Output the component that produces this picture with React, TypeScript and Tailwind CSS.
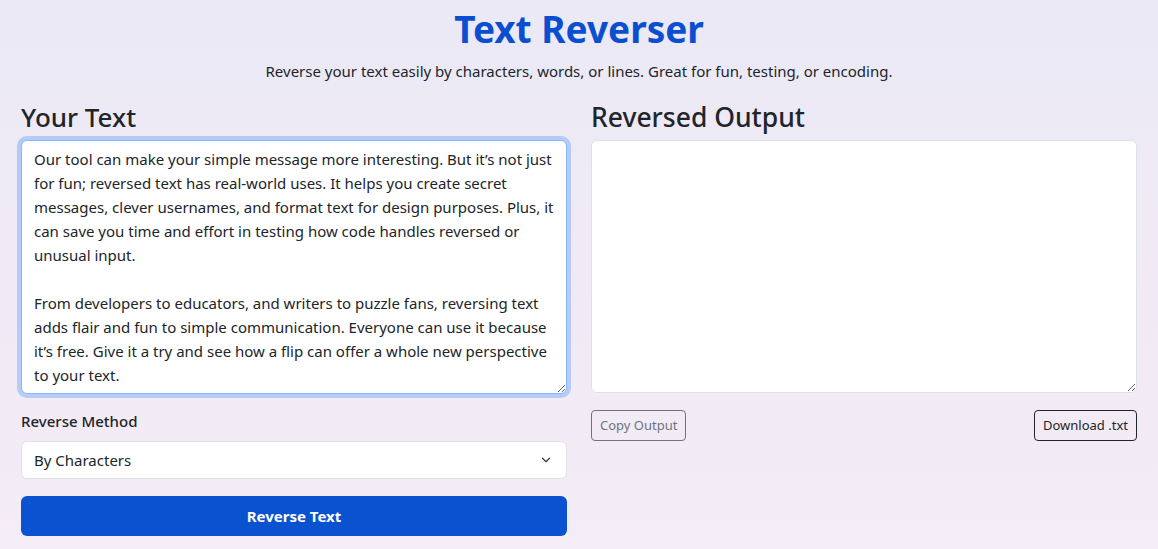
import React, { useState } from 'react';
import { ChevronDown } from 'lucide-react';

const SAMPLE = `Our tool can make your simple message more interesting. But it’s not just for fun; reversed text has real-world uses. It helps you create secret messages, clever usernames, and format text for design purposes. Plus, it can save you time and effort in testing how code handles reversed or unusual input.

From developers to educators, and writers to puzzle fans, reversing text adds flair and fun to simple communication. Everyone can use it because it’s free. Give it a try and see how a flip can offer a whole new perspective to your text.`;

const App = () => {
  const [text, setText] = useState(SAMPLE);
  const [method, setMethod] = useState('chars');
  const [output, setOutput] = useState('');

  const reverse = () => {
    if (method === 'words') setOutput(text.split(' ').reverse().join(' '));
    else if (method === 'lines') setOutput(text.split('\n').reverse().join('\n'));
    else setOutput(Array.from(text).reverse().join(''));
  };

  return (
    <div className="min-h-[549px] bg-gradient-to-b from-[#ebe9f6] to-[#f4ecf6] font-['Noto_Sans',sans-serif] text-[#212529]">
      <div className="mx-auto max-w-[1140px] px-3">
        <h1 className="pt-[5px] text-center text-[37px] font-bold leading-[48px] text-[#0b4fd0]">Text Reverser</h1>
        <p className="mt-[6px] text-center text-[15px] leading-6">
          Reverse your text easily by characters, words, or lines. Great for fun, testing, or encoding.
        </p>

        <div className="mt-[17px] grid grid-cols-2 gap-6">
          <div>
            <h2 className="text-[26px] font-medium leading-[34px]">Your Text</h2>
            <textarea
              rows={10}
              value={text}
              onChange={(e) => setText(e.target.value)}
              className="mt-[6px] block h-[254px] w-full rounded-md border border-[#86b7fe] bg-white px-3 py-[6px] text-[15px] leading-6 outline-none ring-4 ring-[#0d6efd]/25"
            />

            <label className="mt-[15px] block text-[15px] font-medium leading-6">Reverse Method</label>
            <div className="relative mt-2">
              <select
                value={method}
                onChange={(e) => setMethod(e.target.value)}
                className="block h-[38px] w-full appearance-none rounded-md border border-[#dee2e6] bg-white px-3 text-[15px]"
              >
                <option value="chars">By Characters</option>
                <option value="words">By Words</option>
                <option value="lines">By Lines</option>
              </select>
              <ChevronDown className="pointer-events-none absolute right-[14px] top-[12px] h-[14px] w-[14px] text-[#343a40]" strokeWidth={2} />
            </div>

            <button
              onClick={reverse}
              className="mt-[17px] block h-10 w-full rounded-md bg-[#0b52d1] text-[15px] font-bold text-white"
            >
              Reverse Text
            </button>
          </div>

          <div>
            <h2 className="text-[26.5px] font-medium leading-[34px]">Reversed Output</h2>
            <textarea
              rows={10}
              readOnly
              value={output}
              className="mt-[6px] block h-[253px] w-full rounded-md border border-[#dee2e6] bg-white px-3 py-[6px] text-[15px] leading-6 outline-none"
            />
            <div className="mt-[17px] flex justify-between">
              <button className="h-[31px] rounded border border-[#6c757d] px-2 text-[13px] text-[#6c757d]">
                Copy Output
              </button>
              <button className="h-[31px] rounded border border-[#212529] px-2 text-[13px] text-[#212529]">
                Download .txt
              </button>
            </div>
          </div>
        </div>
      </div>
    </div>
  );
};

export default App;
